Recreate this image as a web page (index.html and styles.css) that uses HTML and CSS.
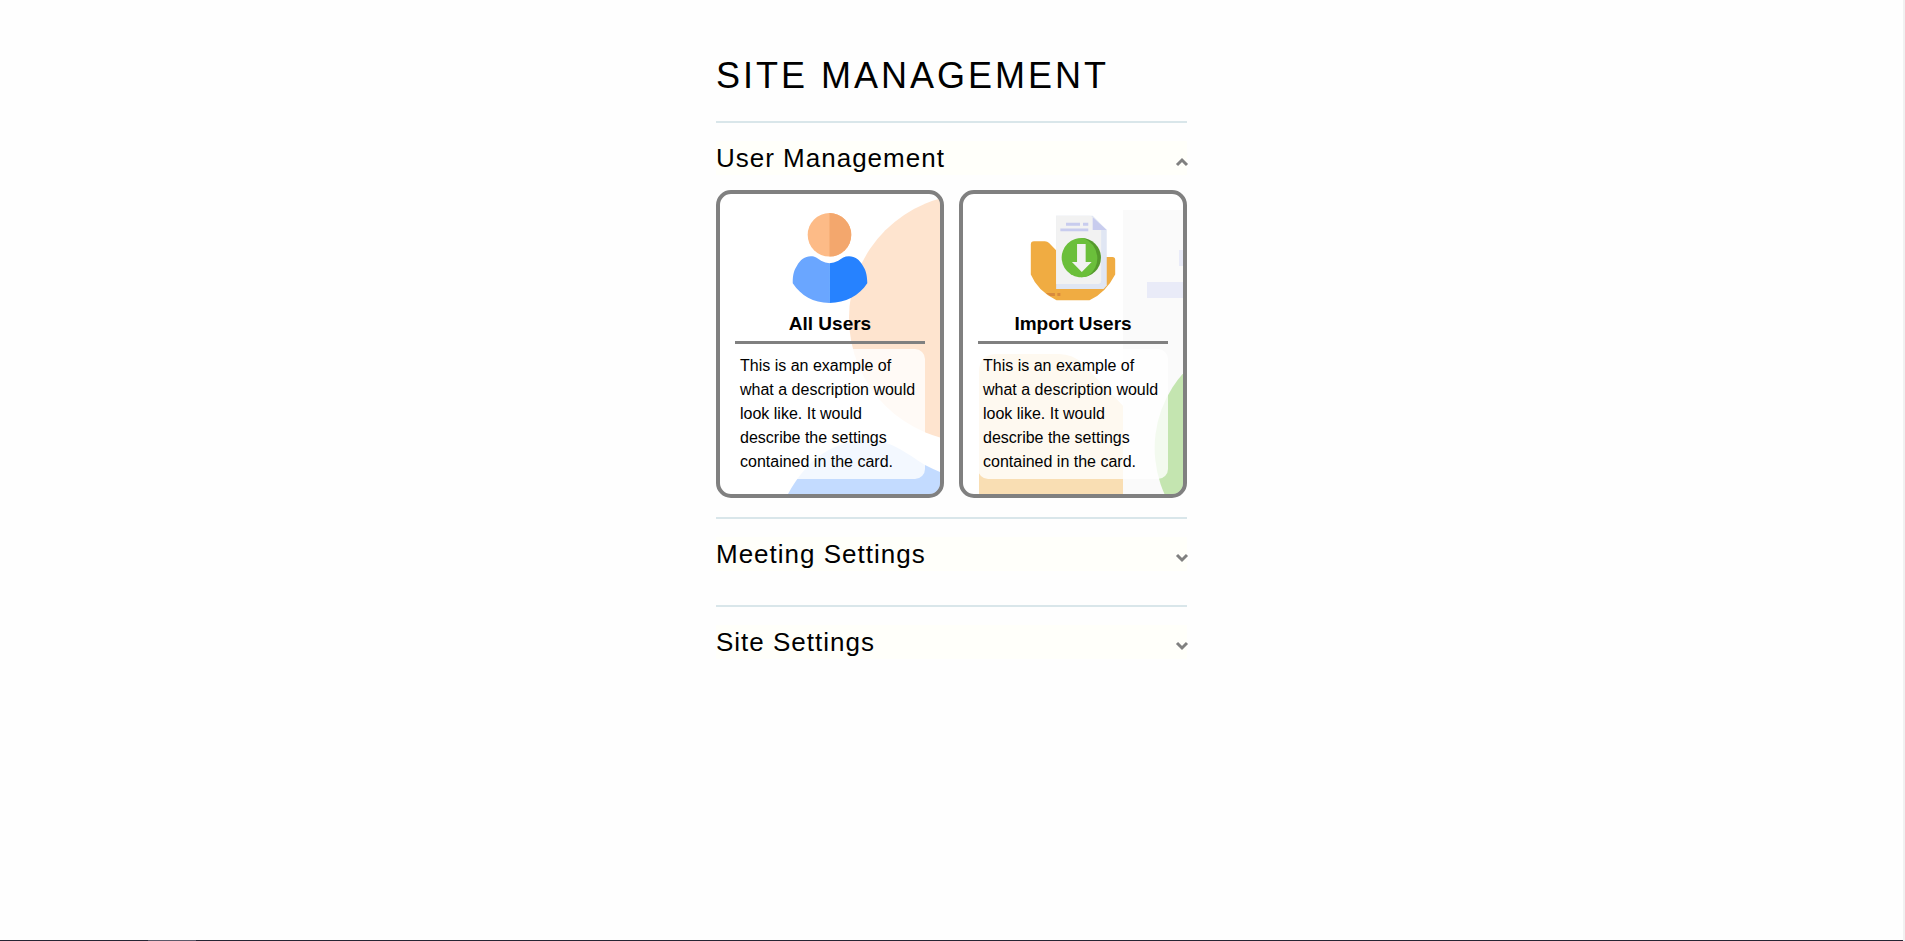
FILE: index.html
```html
<!DOCTYPE html>
<html lang="en">
<head>
<meta charset="utf-8">
<title>Site Management</title>
<link rel="stylesheet" href="styles.css">
</head>
<body>
<svg class="sprite" aria-hidden="true">
  <symbol id="icon-user" viewBox="0 0 512 512">
    <circle cx="253" cy="124" r="124" fill="#fdbb87"/>
    <path d="M253 0a124 124 0 0 1 0 248z" fill="#f3a76d"/>
    <path d="M44 394C44 350 52 325 68 300C88 264 112 248 146 246C172 246 184 258 205 271Q230 284 253 286V512C160 512 92 470 44 400z" fill="#6aa6ff"/>
    <path d="M468 394C467 350 459 325 443 300C423 264 400 248 364 246C338 246 324 258 303 271Q278 284 253 286V512C344 512 422 470 468 400z" fill="#2682ff"/>
  </symbol>
  <symbol id="icon-import" viewBox="0 0 512 512">
    <path d="M16 178q0-18 18-18h62q14 0 24 10l44 46V240h280V250h36q16 0 16 16V350Q440 458 350 496H162Q56 446 16 350z" fill="#f0ac42"/>
    <path d="M160 16H368L448 96V412L430 432H160z" fill="#e0e6f3"/>
    <path d="M160 16H346Q360 16 368 24L416 96V386q0 18-18 18H160z" fill="#f2f2f2"/>
    <path d="M368 24L448 97H368z" fill="#c8ccee"/>
    <path d="M216 56h80v16h-80zM313 56h30v16h-30zM184 88h159v16H184z" fill="#c8ccee"/>
    <path d="M303 142a112 112 0 0 1 0 224z" fill="#559a2c"/>
    <path d="M318 143A112 112 0 1 0 340 360A124 124 0 0 0 318 143z" fill="#6bbf3b"/>
    <path d="M279 176h49v103h34l-56 57-56-57h29z" fill="#f2f2f2"/>
    <path d="M102 455h51v17h-27zM167 455h17v17h-17z" fill="#d88a3d"/>
  </symbol>
</svg>
<main class="page">
  <h1 class="page-title">SITE MANAGEMENT</h1>
  <section class="group group-open">
    <h2 class="group-heading"><button class="group-toggle" type="button" aria-expanded="true">User Management
      <svg class="chevron" viewBox="0 0 14 10" aria-hidden="true"><path d="M2 8l5-5 5 5"/></svg></button></h2>
    <div class="cards">
      <a class="card" href="#all-users">
        <svg class="card-backdrop" aria-hidden="true"><use href="#icon-user"/></svg>
        <svg class="card-icon" aria-hidden="true"><use href="#icon-user"/></svg>
        <h3 class="card-title">All Users</h3>
        <p class="card-text">This is an example of what a description would look like. It would describe the settings contained in the card.</p>
      </a>
      <a class="card" href="#import-users">
        <svg class="card-backdrop" aria-hidden="true"><use href="#icon-import"/></svg>
        <svg class="card-icon" aria-hidden="true"><use href="#icon-import"/></svg>
        <h3 class="card-title">Import Users</h3>
        <p class="card-text">This is an example of what a description would look like. It would describe the settings contained in the card.</p>
      </a>
    </div>
  </section>
  <section class="group">
    <h2 class="group-heading"><button class="group-toggle" type="button" aria-expanded="false">Meeting Settings
      <svg class="chevron" viewBox="0 0 14 10" aria-hidden="true"><path d="M2 2l5 5 5-5"/></svg></button></h2>
  </section>
  <section class="group">
    <h2 class="group-heading"><button class="group-toggle" type="button" aria-expanded="false">Site Settings
      <svg class="chevron" viewBox="0 0 14 10" aria-hidden="true"><path d="M2 2l5 5 5-5"/></svg></button></h2>
  </section>
</main>
<div class="bottom-edge"><span class="bottom-edge-active"></span></div>
</body>
</html>
```
FILE: styles.css
```css
* { box-sizing: border-box; }

body {
  margin: 0;
  min-height: 100vh;
  display: flex;
  flex-direction: column;
  background: #fefefe;
  border-right: 2px solid #f1f1f1;
  color: #000;
  font: 16px/24px "Liberation Sans", Arial, sans-serif;
}

.sprite { position: absolute; width: 0; height: 0; }

.page {
  flex: 1;
  width: 100%;
  max-width: 471px;
  margin: 0 auto;
  padding-top: 55px;
}

.page-title {
  margin: 0 0 24px;
  font-size: 36px;
  font-weight: 400;
  line-height: 42px;
  letter-spacing: 3px;
}

.group {
  border-top: 2px solid #d9e6ea;
  padding: 18px 0 34px;
}

.group-open { padding-bottom: 19px; }

.group-heading { margin: 0; }

.group-toggle {
  display: flex;
  align-items: center;
  justify-content: space-between;
  width: 100%;
  padding: 0;
  border: 0;
  background: #fffffa;
  color: inherit;
  font: 400 26px/34px "Liberation Sans", Arial, sans-serif;
  letter-spacing: 1px;
  cursor: pointer;
}

.chevron {
  width: 14px;
  height: 10px;
  margin: 8px -2px 0 0;
  overflow: visible;
  fill: none;
  stroke: #808080;
  stroke-width: 3;
}

.cards {
  display: grid;
  grid-template-columns: 1fr 1fr;
  gap: 15px;
  margin-top: 15px;
}

.card {
  position: relative;
  overflow: hidden;
  display: flex;
  flex-direction: column;
  padding: 19px 15px 15px;
  border: 4px solid #808080;
  border-radius: 15px;
  background: #fff;
  color: inherit;
  text-decoration: none;
}

.card-backdrop {
  position: absolute;
  top: 0;
  left: 0;
  width: 512px;
  height: 512px;
  opacity: 0.4;
}

.card-icon {
  position: relative;
  align-self: center;
  width: 90px;
  height: 90px;
}

.card-title {
  position: relative;
  margin: 0 0 5px;
  padding: 10px 0 7px;
  border-bottom: 3px solid #808080;
  font-size: 19px;
  line-height: 21px;
  text-align: center;
}

.card-text {
  position: relative;
  margin: 0;
  padding: 5px;
  border-radius: 10px;
  background: rgba(255, 255, 255, 0.8);
}

.bottom-edge {
  height: 1px;
  margin-right: -2px;
  background: #252433;
}

.bottom-edge-active {
  display: block;
  width: 48px;
  height: 1px;
  margin-left: 148px;
  background: #5b5869;
}
```
